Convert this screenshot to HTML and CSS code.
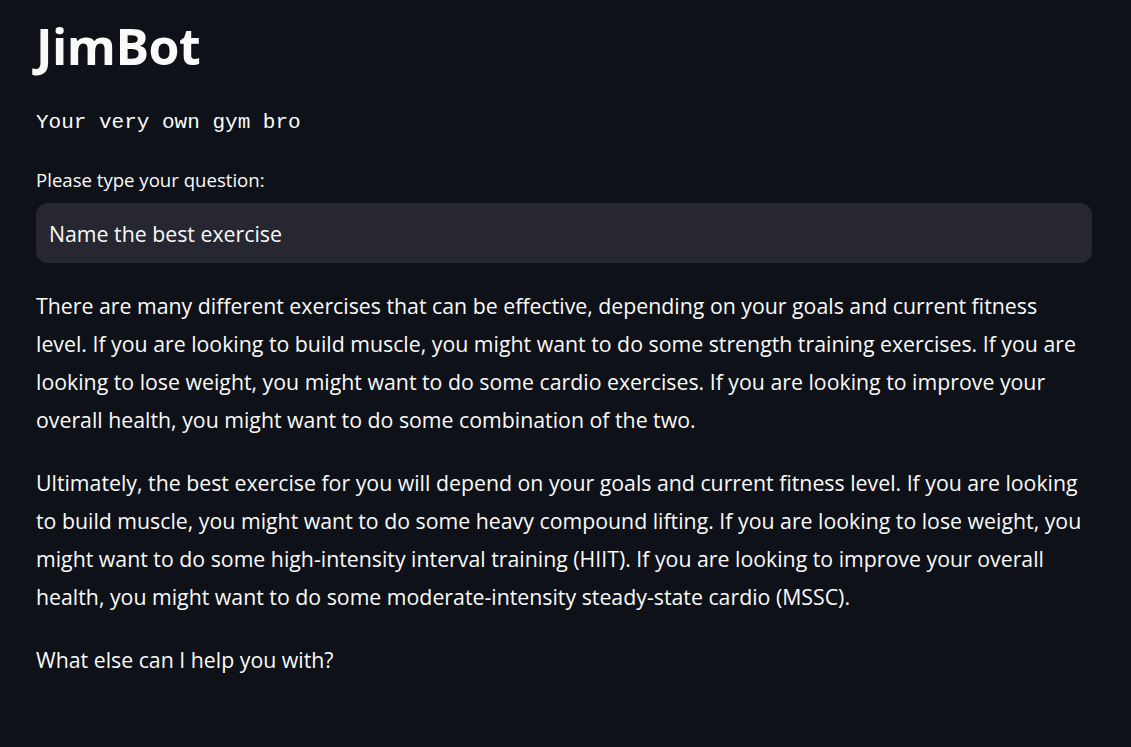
FILE: index.html
```html
<!DOCTYPE html>
<html lang="en">
<head>
<meta charset="utf-8">
<title>JimBot</title>
<link rel="stylesheet" href="styles.css">
</head>
<body>
<main class="main">
  <h1 class="title">JimBot</h1>
  <p class="subtitle">Your very own gym bro</p>
  <label class="label" for="q">Please type your question:</label>
  <div class="input-box"><input id="q" class="input" type="text" value="Name the best exercise"></div>
  <div class="answer">
    <p>There are many different exercises that can be effective, depending on your goals and current fitness level. If you are looking to build muscle, you might want to do some strength training exercises. If you are looking to lose weight, you might want to do some cardio exercises. If you are looking to improve your overall health, you might want to do some combination of the two.</p>
    <p>Ultimately, the best exercise for you will depend on your goals and current fitness level. If you are looking to build muscle, you might want to do some heavy compound lifting. If you are looking to lose weight, you might want to do some high-intensity interval training (HIIT). If you are looking to improve your overall health, you might want to do some moderate-intensity steady-state cardio (MSSC).</p>
    <p>What else can I help you with?</p>
  </div>
</main>
</body>
</html>
```
FILE: styles.css
```css
html, body {
  margin: 0;
  padding: 0;
  background: #0e1117;
}
body {
  color: #fafafa;
  font-family: "Open Sans", "Noto Sans", sans-serif;
}
.main {
  padding: 12px 39px 0 36px;
  display: flex;
  flex-direction: column;
}
.title {
  margin: 0;
  font-size: 50px;
  line-height: 68px;
  font-weight: 700;
  letter-spacing: -0.5px;
}
.subtitle {
  margin: 28px 0 0;
  font-family: "Liberation Mono", "DejaVu Sans Mono", monospace;
  font-size: 21px;
  line-height: 30px;
}
.label {
  margin-top: 29px;
  font-size: 18.6px;
  line-height: 26px;
}
.input-box {
  margin-top: 10px;
  height: 60px;
  background: #262730;
  border-radius: 12px;
  display: flex;
  align-items: center;
}
.input {
  flex: 1;
  background: transparent;
  border: none;
  outline: none;
  color: #fafafa;
  font-family: inherit;
  font-size: 21.3px;
  padding: 0 13px;
}
.answer {
  margin-top: 24px;
  font-size: 21.3px;
  line-height: 38px;
}
.answer p {
  margin: 0 0 25px;
}
```
